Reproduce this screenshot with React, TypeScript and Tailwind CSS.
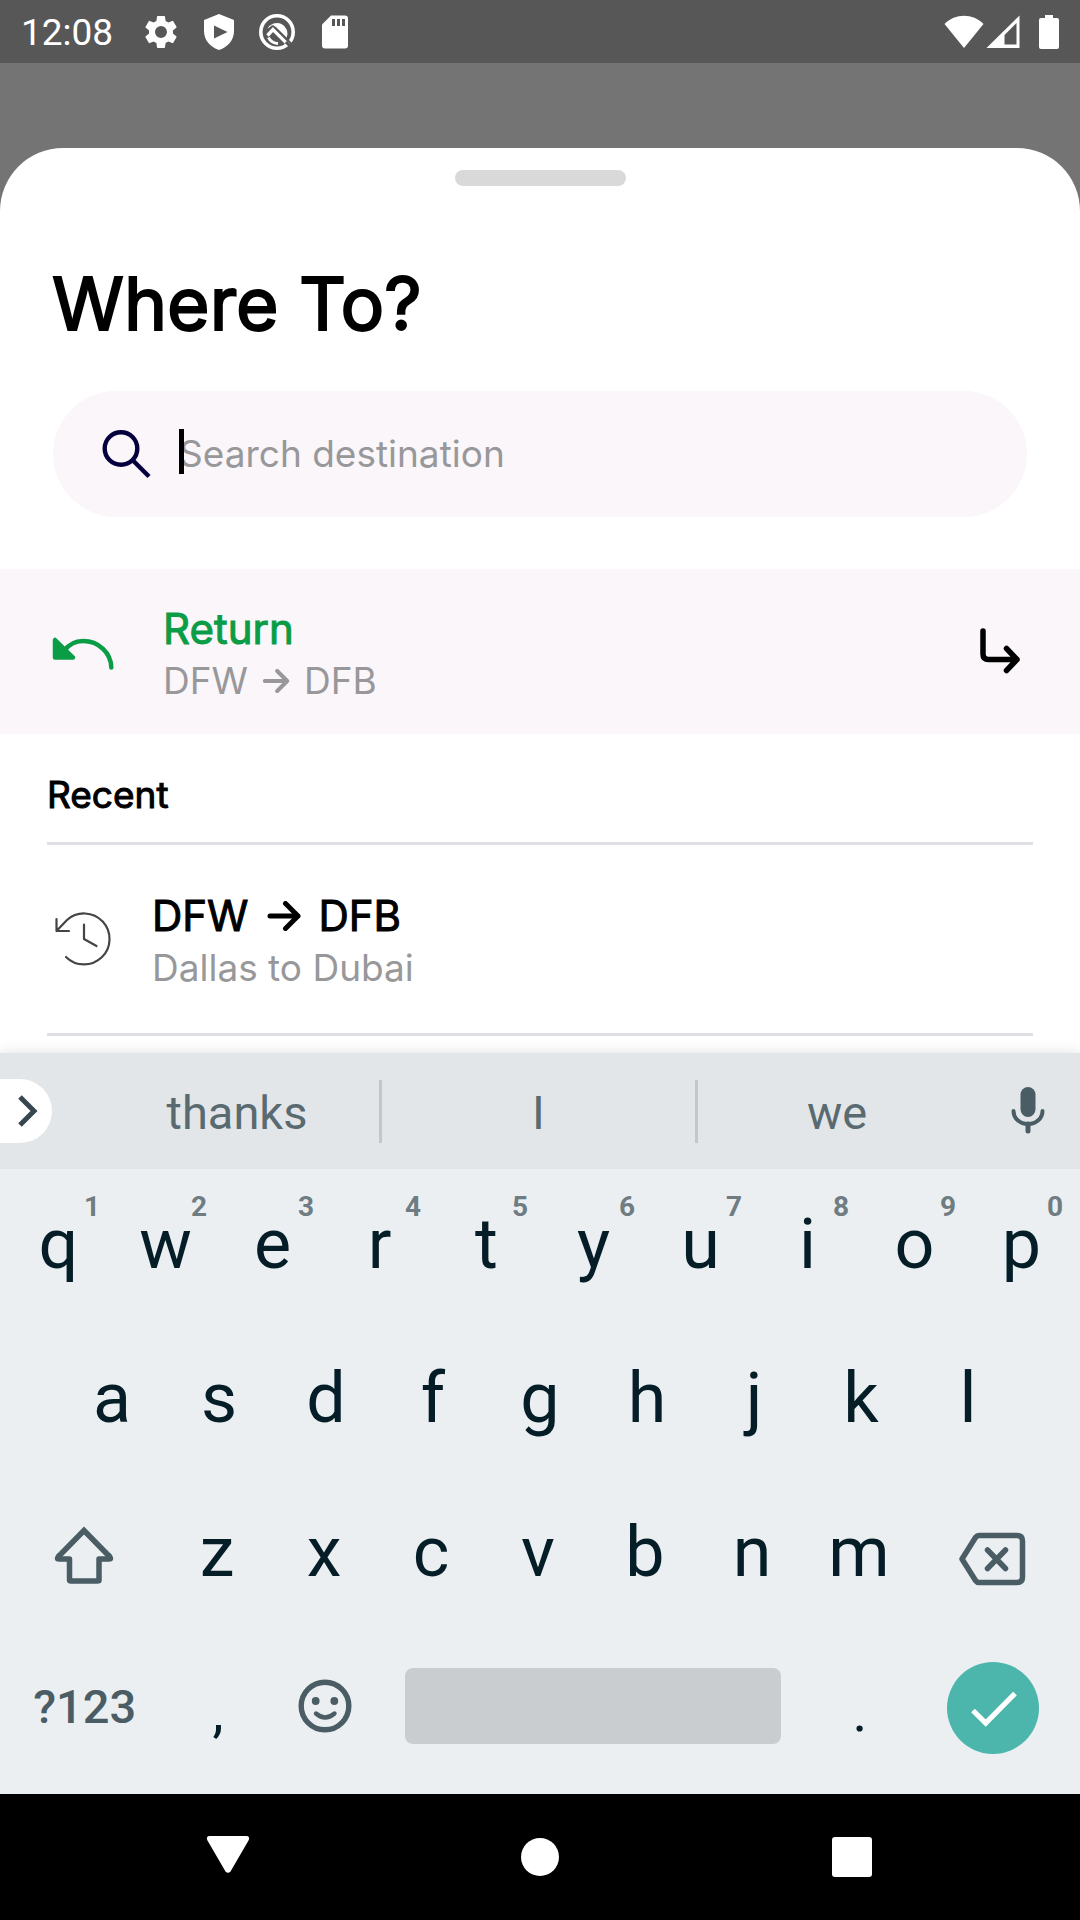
import React from "react";

const stroke = { fill: "none", stroke: "currentColor", strokeLinecap: "round", strokeLinejoin: "round" } as const;

function StatusBar() {
  return (
    <header className="flex h-[63px] items-center justify-between bg-[#575757] pr-5 pl-[21px] text-white">
      <div className="flex items-center">
        <time className="mr-7 pt-0.5 font-[Roboto,sans-serif] text-[37px] leading-none">12:08</time>
        <div className="flex items-center gap-[18px]">
          <svg width="40" height="40" viewBox="0 0 24 24" fill="currentColor" aria-label="Settings">
            <path d="M19.14 12.94c.04-.3.06-.61.06-.94 0-.32-.02-.64-.07-.94l2.03-1.58a.49.49 0 0 0 .12-.61l-1.92-3.32a.49.49 0 0 0-.59-.22l-2.39.96c-.5-.38-1.03-.7-1.62-.94l-.36-2.54a.48.48 0 0 0-.48-.41h-3.84a.47.47 0 0 0-.47.41l-.36 2.54c-.59.24-1.13.57-1.62.94l-2.39-.96a.48.48 0 0 0-.59.22L2.74 8.87a.47.47 0 0 0 .12.61l2.03 1.58c-.05.3-.09.63-.09.94s.02.64.07.94l-2.03 1.58a.49.49 0 0 0-.12.61l1.92 3.32c.12.22.37.29.59.22l2.39-.96c.5.38 1.03.7 1.62.94l.36 2.54c.05.24.24.41.48.41h3.84c.24 0 .44-.17.47-.41l.36-2.54c.59-.24 1.13-.56 1.62-.94l2.39.96c.22.08.47 0 .59-.22l1.92-3.32a.47.47 0 0 0-.12-.61l-2.01-1.58zM12 15.6A3.6 3.6 0 1 1 12 8.4a3.6 3.6 0 0 1 0 7.2z" />
          </svg>
          <svg width="40" height="40" viewBox="0 0 40 40" aria-label="Play Protect">
            <path d="M20 2 L35 8 V19 C35 28 29 35 20 38 C11 35 5 28 5 19 V8 Z" fill="currentColor" />
            <path d="M15 13.5 L28.5 20 L15 26.5 Z" fill="#575757" />
          </svg>
          <svg width="40" height="40" viewBox="0 0 40 40" aria-label="Search service">
            <circle cx="20" cy="20" r="16.200" fill="none" stroke="currentColor" strokeWidth="3.600" />
            <path d="M10.500 17 A10.500 10.500 0 1 1 29.500 26 L17.500 14 Q15.500 12.500 13.500 14.500 Z" fill="currentColor" />
            <path d="M10.500 23.500 L16 17.500 L29 30.500" fill="none" stroke="currentColor" strokeWidth="3.400" />
            <path d="M11.500 25.500 Q14 31 21 31.500" fill="none" stroke="currentColor" strokeWidth="3" />
            <path d="M18 15.500 L36 33.500" fill="none" stroke="#575757" strokeWidth="2" />
            <path d="M29 30 L36 37" fill="none" stroke="#575757" strokeWidth="3" />
          </svg>
          <svg width="40" height="40" viewBox="0 0 40 40" aria-label="SD card">
            <path d="M16 3.5 H30 Q33 3.5 33 6.5 V33.5 Q33 36.5 30 36.5 H10 Q7 36.5 7 33.5 V12.5 Z" fill="currentColor" />
            <path d="M18.5 7 V14 M23.5 7 V14 M28.5 7 V14" stroke="#575757" strokeWidth="3" />
          </svg>
        </div>
      </div>
      <div className="flex items-center">
        <svg width="40" height="34" viewBox="0 0 40 34" aria-label="Wi-Fi">
          <path d="M0.5 9 C11 -2 29 -2 39.500 9 L20 33 Z" fill="currentColor" />
        </svg>
        <svg className="ml-0.5" width="34" height="34" viewBox="0 0 34 34" aria-label="Mobile signal">
          <path fillRule="evenodd" d="M33.500 0.500 V33 H0.500 Z M30.500 8 L18.500 20 V29.500 H30.500 Z" fill="currentColor" />
        </svg>
        <svg className="ml-[18px]" width="22" height="34" viewBox="0 0 22 34" aria-label="Battery">
          <path d="M7 0 H15 V3 H19 Q21 3 21 5 V32 Q21 34 19 34 H3 Q1 34 1 32 V5 Q1 3 3 3 H7 Z" fill="currentColor" />
        </svg>
      </div>
    </header>
  );
}

function RouteArrow({ className }: { className: string }) {
  return (
    <svg className={className} viewBox="0 0 34 30" {...stroke} strokeWidth="5" aria-label="to">
      <path d="M3 15 H31 M18.500 2.500 L31 15 L18.500 27.500" />
    </svg>
  );
}

function Sheet() {
  return (
    <section className="mt-[85px] flex-1 rounded-t-[63px] bg-white font-[Inter,sans-serif] text-black">
      <div className="pt-[22px]">
        <div className="mx-auto h-4 w-[171px] rounded-full bg-[#d9d9d9]" />
      </div>
      <h1 className="mx-[52px] mt-[70px] text-[73px] leading-[96px] font-normal [-webkit-text-stroke:2px]">Where To?</h1>
      <label className="mx-[53px] mt-[39px] flex h-[126px] items-center rounded-full bg-[#faf6fa] pl-[49px]">
        <svg width="50" height="50" viewBox="0 0 50 50" className="shrink-0 text-[#05003d]" fill="none" stroke="currentColor" strokeWidth="4.400" aria-label="Search">
          <circle cx="19" cy="19.500" r="16.300" />
          <path d="M30.500 31 L47 47.500" />
        </svg>
        <span className="relative ml-[27px] flex-1">
          <input
            type="text"
            aria-label="Search destination"
            placeholder="Search destination"
            className="block w-full bg-transparent text-[37px] leading-[46px] caret-transparent outline-none placeholder:text-[#98989b]"
          />
          <span className="absolute -top-0.5 left-0 h-[45px] w-[5px] bg-black" />
        </span>
      </label>

      <button type="button" className="mt-[52px] flex h-[165px] w-full items-center bg-[#faf6fa] pr-[58px] pl-[52px] text-left">
        <svg width="62" height="38" viewBox="0 -4 62 38" className="text-[#0b9c46]" {...stroke} strokeWidth="4.500" aria-hidden="true">
          <path d="M12 14 C17 7 24 4 31 4 C47 4 59 16 59.300 30.500" />
          <path d="M3 3 V20.500 H21 Z" fill="currentColor" />
        </svg>
        <span className="ml-[49px] flex flex-1 flex-col pt-0.5">
          <span className="text-[42px] leading-[56px] text-[#0b9c46] [-webkit-text-stroke:1px]">Return</span>
          <span className="flex items-center gap-3.5 text-[37px] leading-[48px] text-[#98989b]">
            DFW
            <RouteArrow className="h-6 w-7" />
            DFB
          </span>
        </span>
        <svg width="44" height="52" viewBox="0 0 44 52" {...stroke} strokeWidth="5.500" aria-hidden="true">
          <path d="M5 5 V28 Q5 33.500 10.500 33.500 H39 M28.500 22.500 L39 33.500 L28.500 44.500" />
        </svg>
      </button>

      <div className="mx-[47px]">
        <h2 className="border-b-3 border-[#e0dfe6] pt-[37px] pb-[23px] text-[37px] leading-[48px] font-normal [-webkit-text-stroke:1px]">Recent</h2>
        <button type="button" className="flex h-[191px] w-full items-center border-b-3 border-[#e0dfe6] pl-[7px] text-left">
          <svg width="58" height="58" viewBox="0 0 58 58" className="text-[#444]" {...stroke} strokeWidth="2.200" aria-hidden="true">
            <path d="M2.500 9 V21 H15 M2.500 21 L13 10 A25.500 25.500 0 1 1 12 47 M30 14.500 V29 L42.500 36" />
          </svg>
          <span className="ml-10 flex flex-col pt-0.5">
            <span className="flex items-center gap-[18px] text-[42px] leading-[56px] [-webkit-text-stroke:1px]">
              DFW
              <RouteArrow className="h-[30px] w-[34px]" />
              DFB
            </span>
            <span className="text-[37px] leading-[48px] text-[#98989b]">Dallas to Dubai</span>
          </span>
        </button>
      </div>
    </section>
  );
}

function Key({ label, hint }: { label: string; hint?: string }) {
  return (
    <button type="button" className="relative flex w-[10%] items-center justify-center pb-1 text-[70px] text-[#051d27]">
      {label}
      {hint && <span className="absolute top-[22px] right-3 text-[28px] leading-8 font-bold text-[#6f7c82]">{hint}</span>}
    </button>
  );
}

function PunctuationKey({ label }: { label: string }) {
  return (
    <button type="button" className="flex w-[10%] items-center justify-center pt-2 text-[56px] text-[#051d27]">
      {label}
    </button>
  );
}

function Keyboard() {
  const hints = "1234567890";
  return (
    <section className="bg-[#ebeff2] font-[Roboto,sans-serif] shadow-[0_0_14px_rgba(0,0,0,0.12)]">
      <div className="flex h-[116px] items-center bg-[#e2e6e9] text-[47px] text-[#5a6a71]">
        <div className="w-[95px]">
          <button type="button" aria-label="More" className="flex h-16 w-[52px] items-center rounded-r-[32px] bg-white pl-[18px] text-[#37474f]">
            <svg width="20" height="32" viewBox="0 0 20 32" fill="none" stroke="currentColor" strokeWidth="5">
              <path d="M2 2 L16 16 L2 30" />
            </svg>
          </button>
        </div>
        <button type="button" className="flex-[284] pt-1">thanks</button>
        <div className="h-[63px] w-[3px] bg-[#c3c7ca]" />
        <button type="button" className="flex-[313] pt-1">I</button>
        <div className="h-[63px] w-[3px] bg-[#c3c7ca]" />
        <button type="button" className="flex-[278] pt-1">we</button>
        <button type="button" aria-label="Voice input" className="flex w-[104px] justify-center text-[#4a5c64]">
          <svg width="36" height="50" viewBox="0 0 36 50" {...stroke} strokeWidth="4">
            <rect x="10.500" y="1" width="15" height="30" rx="7.500" fill="currentColor" stroke="none" />
            <path d="M3.500 25 C3.500 32.500 10 38 18 38 S32.500 32.500 32.500 25" />
            <path d="M18 38 V45" strokeWidth="5" />
          </svg>
        </button>
      </div>

      <div className="px-[5px] pb-[9px]">
        <div className="flex h-[154px]">
          {[..."qwertyuiop"].map((k, i) => <Key key={k} label={k} hint={hints[i]} />)}
        </div>
        <div className="flex h-[154px] justify-center">
          {[..."asdfghjkl"].map((k) => <Key key={k} label={k} />)}
        </div>
        <div className="flex h-[154px]">
          <button type="button" aria-label="Shift" className="flex flex-1 items-center justify-center pt-0.5 text-[#4a5c64]">
            <svg width="62" height="60" viewBox="0 0 62 60" {...stroke} strokeWidth="5.500">
              <path strokeLinejoin="miter" d="M6 31 L31 5.500 L56 31" />
              <path d="M56 31 Q59 34 56 34 H46 V55.500 Q46 56 44 56 H18 Q16.500 56 16.500 55 V34 H6 Q3 34 6 31" />
            </svg>
          </button>
          {[..."zxcvbnm"].map((k) => <Key key={k} label={k} />)}
          <button type="button" aria-label="Backspace" className="flex flex-1 items-center justify-center pt-2.5 pr-1 text-[#4a5c64]">
            <svg width="70" height="56" viewBox="0 0 70 56" {...stroke} strokeWidth="5.500">
              <path d="M22 4.500 H60 Q65.500 4.500 65.500 10 V46 Q65.500 51.500 60 51.500 H22 Q20 51.500 18.500 49.500 L5 28 L18.500 6.500 Q20 4.500 22 4.500 Z" />
              <path d="M30.500 19 L48.500 37.500 M48.500 19 L30.500 37.500" />
            </svg>
          </button>
        </div>
        <div className="flex h-[154px]">
          <button type="button" className="flex flex-1 items-center justify-center pb-0.5 text-[47px] font-medium text-[#4a5c64]">?123</button>
          <PunctuationKey label="," />
          <button type="button" aria-label="Emoji" className="flex w-[10%] items-center justify-center pb-1 text-[#4a5c64]">
            <svg width="54" height="54" viewBox="0 0 54 54" {...stroke} strokeWidth="5.400">
              <circle cx="27" cy="27" r="23.800" />
              <circle cx="17.700" cy="22" r="3.900" fill="currentColor" stroke="none" />
              <circle cx="36.300" cy="22" r="3.900" fill="currentColor" stroke="none" />
              <path d="M18 34.500 Q27 42.500 36.500 34.500" strokeWidth="4.400" />
            </svg>
          </button>
          <div className="flex w-[40%] items-center px-[26px] pb-1">
            <button type="button" aria-label="Space" className="h-[76px] w-full rounded-lg bg-[#c9cdd0]" />
          </div>
          <PunctuationKey label="." />
          <div className="flex flex-1 items-center justify-center pr-0.5">
            <button type="button" aria-label="Done" className="flex size-[92px] items-center justify-center rounded-full bg-[#4db6ac] text-white">
              <svg width="92" height="92" viewBox="0 0 92 92" fill="none" stroke="currentColor" strokeWidth="5.200">
                <path d="M26 48.500 L38.700 61 L68 31.500" />
              </svg>
            </button>
          </div>
        </div>
      </div>
    </section>
  );
}

function NavBar() {
  return (
    <nav className="grid h-[126px] grid-cols-3 items-center bg-black px-[72px] text-white">
      <button type="button" aria-label="Back" className="flex justify-center">
        <svg width="44" height="44" viewBox="0 0 44 44" fill="currentColor">
          <path d="M3 1 H41 Q44 1.500 42.800 5 L24.500 36.500 Q22 39 19.500 36.500 L1.200 5 Q0 1.500 3 1 Z" />
        </svg>
      </button>
      <button type="button" aria-label="Home" className="flex justify-center">
        <span className="size-[38px] rounded-full bg-white" />
      </button>
      <button type="button" aria-label="Recents" className="flex justify-center">
        <span className="size-10 rounded-[3px] bg-white" />
      </button>
    </nav>
  );
}

export default function App() {
  return (
    <main className="flex min-h-screen flex-col bg-[#747474]">
      <StatusBar />
      <Sheet />
      <Keyboard />
      <NavBar />
    </main>
  );
}
